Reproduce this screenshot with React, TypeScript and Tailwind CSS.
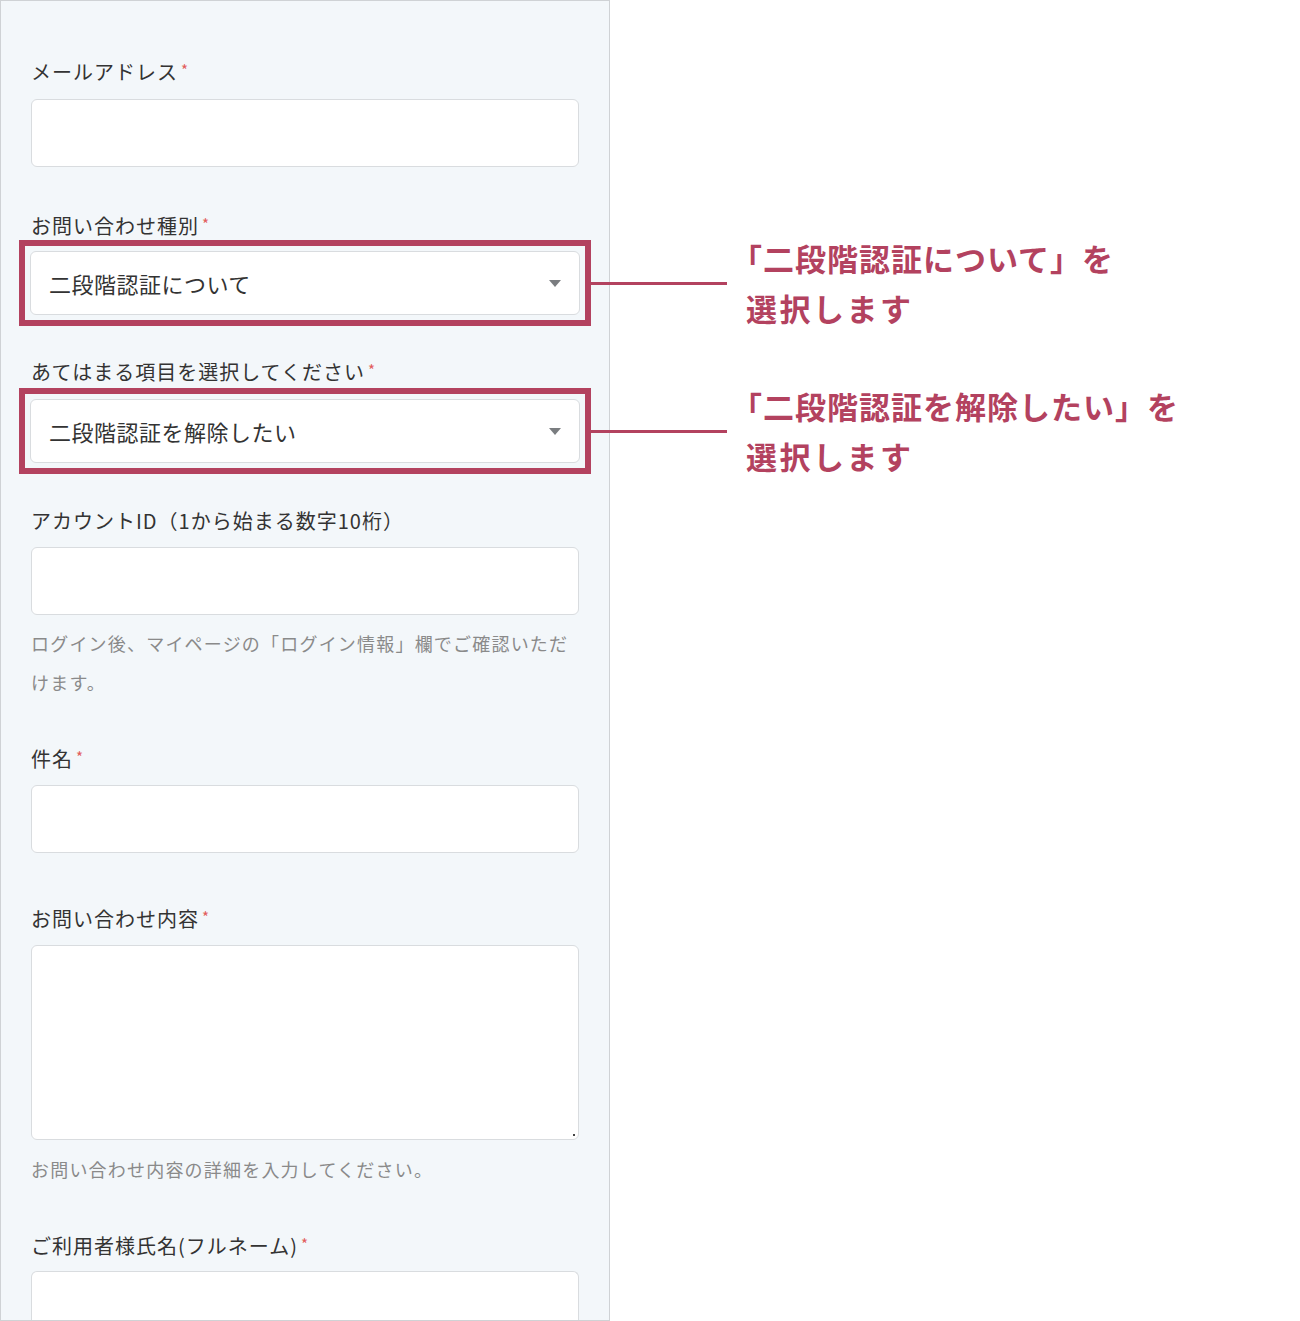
import React from "react";

const FONT = '"Noto Sans CJK JP", "Noto Sans", sans-serif';

function Required() {
  return <span className="relative -top-[4px] ml-[3px] text-[15px] leading-none text-[#e25c5c]">*</span>;
}

function Label({ text, required, className = "" }: { text: string; required?: boolean; className?: string }) {
  return (
    <div className={`text-[20px] leading-[28px] tracking-[1px] text-[#333] ${className}`}>
      {text}
      {required && <Required />}
    </div>
  );
}

function TextBox({ className = "" }: { className?: string }) {
  return (
    <input
      type="text"
      className={`block h-[68px] w-full rounded-[6px] border border-[#d9dcdf] bg-white px-[18px] outline-none ${className}`}
    />
  );
}

function SelectBox({ value }: { value: string }) {
  return (
    <div className="flex h-[64px] items-center justify-between rounded-[6px] border border-[#d9dcdf] bg-white pl-[18px] pr-[18px]">
      <span className="text-[22px] tracking-[0.5px] text-[#333]">{value}</span>
      <svg width="12" height="7" viewBox="0 0 12 7">
        <path d="M0 0 H12 L6 7 Z" fill="#7a7d80" />
      </svg>
    </div>
  );
}

function Highlight({ value, note, className = "" }: { value: string; note: string; className?: string }) {
  return (
    <div className={`relative -mx-[12px] border-[6px] border-[#b3425f] p-[5px] ${className}`}>
      <SelectBox value={value} />
      {/* callout */}
      <div className="absolute left-full top-1/2 flex -translate-y-1/2 items-center">
        <div className="h-[3px] w-[142px] bg-[#b3425f]" />
        <div className="ml-[19px] whitespace-nowrap text-[31px] font-bold leading-[50px] tracking-[1px] text-[#b3425f]">
          <div>
            <span className="-ml-[15px]">「</span>
            {note}」を
          </div>
          <div className="tracking-[2.5px]">選択します</div>
        </div>
      </div>
    </div>
  );
}

function Help({ children, className = "" }: { children: React.ReactNode; className?: string }) {
  return <p className={`text-[18px] leading-[39px] tracking-[1.2px] text-[#8a8a8a] ${className}`}>{children}</p>;
}

export default function App() {
  return (
    <div className="flex min-h-[1321px] w-[1300px] bg-white" style={{ fontFamily: FONT }}>
      <div className="h-[1321px] w-[610px] shrink-0 border border-[#cfd2d5] bg-[#f3f7fa] px-[30px] pt-[57px]">
        <Label text="メールアドレス" required />
        <TextBox className="mt-[13px]" />

        <Label text="お問い合わせ種別" required className="mt-[45px]" />
        <Highlight value="二段階認証について" note="二段階認証について" />

        <Label text="あてはまる項目を選択してください" required className="mt-[32px]" />
        <Highlight className="mt-[2px]" value="二段階認証を解除したい" note="二段階認証を解除したい" />

        <Label text="アカウントID（1から始まる数字10桁）" className="mt-[33px]" />
        <TextBox className="mt-[12px]" />
        <Help className="mt-[9px]">ログイン後、マイページの「ログイン情報」欄でご確認いただけます。</Help>

        <Label text="件名" required className="mt-[43px]" />
        <TextBox className="mt-[12px]" />

        <Label text="お問い合わせ内容" required className="mt-[52px]" />
        <div className="relative mt-[12px] h-[195px] rounded-[6px] border border-[#d9dcdf] bg-white">
          <span className="absolute bottom-[3px] right-[3px] h-[2px] w-[2px] bg-[#444]" />
        </div>
        <Help className="mt-[10px]">お問い合わせ内容の詳細を入力してください。</Help>

        <Label text="ご利用者様氏名(フルネーム)" required className="mt-[43px]" />
        <div className="mt-[11px] h-[49px] rounded-t-[6px] border border-b-0 border-[#d9dcdf] bg-white" />
      </div>
    </div>
  );
}
